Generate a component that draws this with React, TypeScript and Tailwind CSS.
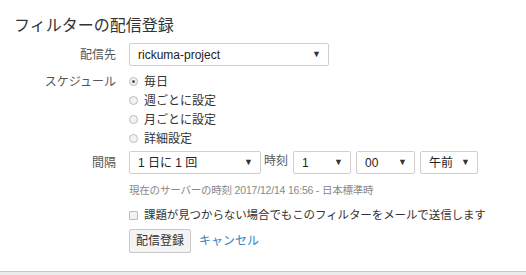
import React from "react";

const jp = { fontFamily: '"Liberation Sans", "Noto Sans CJK JP", sans-serif' };

function Select({ value, className }: { value: string; className: string }) {
  return (
    <div
      className={`flex h-[23px] items-center justify-between rounded-[2px] border border-[#cfcfcf] bg-white pl-[8px] pr-[7px] text-[12px] text-[#222] ${className}`}
    >
      <span>{value}</span>
      <span className="text-[9px] leading-none text-[#333]">▼</span>
    </div>
  );
}

function Radio({ label, checked }: { label: string; checked?: boolean }) {
  return (
    <div className="flex h-[19px] items-center">
      <span className="flex size-[9px] items-center justify-center rounded-full border border-[#bdbdbd] bg-[#f2f2f2]">
        {checked && <span className="size-[3px] rounded-full bg-[#555]" />}
      </span>
      <span className="ml-[6px] text-[12px] text-[#333]">{label}</span>
    </div>
  );
}

export default function App() {
  return (
    <div className="h-[275px] w-[526px] overflow-hidden bg-white" style={jp}>
      <div className="h-[272px] border-b border-[#c8c8c8]">
        <h1 className="pl-[14px] pt-[15px] text-[16px] leading-[22px] text-[#333]">フィルターの配信登録</h1>

        <div className="mt-[6px] flex items-center">
          <div className="w-[116px] text-right text-[12px] text-[#555]">配信先</div>
          <Select value="rickuma-project" className="ml-[13px] w-[200px]" />
        </div>

        <div className="mt-[6px] flex">
          <div className="flex h-[19px] w-[116px] items-center justify-end text-[12px] text-[#555]">スケジュール</div>
          <div className="ml-[13px] flex flex-col">
            <Radio label="毎日" checked />
            <Radio label="週ごとに設定" />
            <Radio label="月ごとに設定" />
            <Radio label="詳細設定" />
          </div>
        </div>

        <div className="mt-[3px] flex items-start">
          <div className="flex h-[23px] w-[116px] items-center justify-end text-[12px] text-[#555]">間隔</div>
          <Select value="1 日に 1 回" className="ml-[13px] w-[132px]" />
          <div className="ml-[3px] pt-[1px] text-[12px] text-[#555]">時刻</div>
          <Select value="1" className="ml-[5px] w-[58px]" />
          <Select value="00" className="ml-[5px] w-[59px]" />
          <Select value="午前" className="ml-[5px] w-[58px]" />
        </div>

        <div className="ml-[129px] mt-[9px] text-[10.5px] tracking-[-0.2px] text-[#888]">
          現在のサーバーの時刻 2017/12/14 16:56 - 日本標準時
        </div>

        <div className="ml-[129px] mt-[8px] flex items-center">
          <span className="size-[9px] rounded-[1px] border border-[#bdbdbd] bg-[#f2f2f2]" />
          <span className="ml-[6px] text-[11.5px] tracking-[-0.1px] text-[#333]">
            課題が見つからない場合でもこのフィルターをメールで送信します
          </span>
        </div>

        <div className="ml-[129px] mt-[5px] flex items-center">
          <button className="h-[24px] w-[62px] rounded-[2px] border border-[#c8c8c8] bg-[#f4f4f4] text-[12px] text-[#333]">
            配信登録
          </button>
          <a className="ml-[8px] text-[12px] text-[#3d7fc1]">キャンセル</a>
        </div>
      </div>
      <div className="h-[3px] bg-[#ececec]" />
    </div>
  );
}
